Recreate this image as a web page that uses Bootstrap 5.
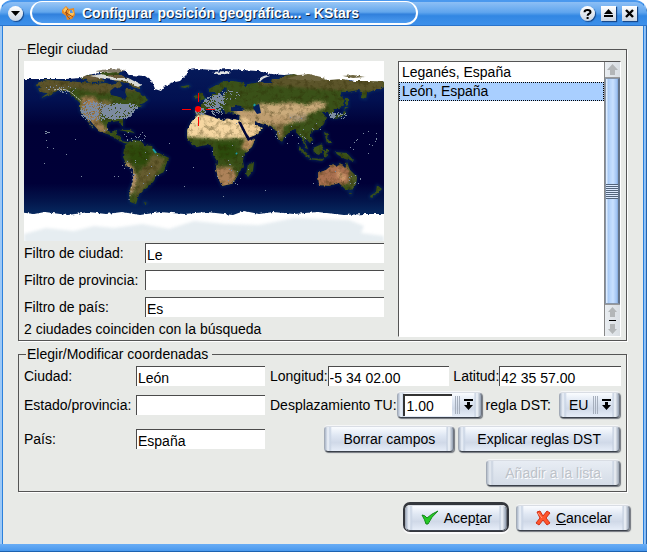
<!DOCTYPE html>
<html lang="es">
<head>
<meta charset="utf-8">
<meta name="viewport" content="width=device-width, initial-scale=1">
<title>Configurar posición geográfica... - KStars</title>
<link href="https://cdn.jsdelivr.net/npm/bootstrap@5.3.0/dist/css/bootstrap.min.css" rel="stylesheet">
<style>
body{font:14px/16px "Liberation Sans",Arial,sans-serif;color:#000;background:#fff}
.win{min-height:100vh;padding:2px 4px 8px 3px;border-radius:12px 12px 0 0;
 background:linear-gradient(#1c62b0,#1c62b0) 0 100%/100% 1px no-repeat,linear-gradient(#69adf5,#4495ec) 0 100%/100% 8px no-repeat,linear-gradient(90deg,#9cc8f6 2px,#2a80dc 2px,#2a80dc 3px,#4a98ee 3px,#4a98ee calc(100% - 4px),#2a80dc calc(100% - 4px),#2a80dc calc(100% - 3px),#9cc8f6 calc(100% - 3px),#7db6f4 calc(100% - 1px),#2464ae calc(100% - 1px))}
.titlebar{height:24px;margin:0 -4px 0 -3px;padding:0 10px 0 8px;border-radius:12px 12px 0 0;border-bottom:1px solid #2a74cc;background:linear-gradient(#8dbff5,#5fa5ee 45%,#3287e3 60%,#3d90ea)}
.tab{height:24px;margin-top:-1px;margin-left:7px;width:388px;padding-left:29px;border:2px solid #fff;border-top-width:1px;border-radius:12px;background:linear-gradient(#9ac7f6,#62a6ec 48%,#3180dc 58%,#4d9cf0)}
.tab h1{font-size:14px;line-height:20px;font-weight:700;color:#fff;text-shadow:1px 1px 0 #10243c;margin:0 0 0 6px;white-space:nowrap}
.tools{gap:6px}
.tbtn{width:15px;height:15px;padding:0;border:0;background:linear-gradient(#fff,#c9d4e2);box-shadow:1px 1px 1px #17488a;display:flex;align-items:center;justify-content:center}
.tbtn.round{border-radius:50%}
.content-area{background:#e8eae7;padding:15px 16px 12px 15px}
fieldset{border:1px solid #555;box-shadow:1px 1px 0 #fff;padding:0 5px}
legend{float:none;width:auto;font-size:14px;line-height:16px;margin:0 0 0 2px;padding:0 4px 0 1px;background:#e8eae7}
.cities{padding-bottom:3px}
.coords{padding-bottom:5px;margin-top:5px}
.split{display:grid;grid-template-columns:360fr 223fr;gap:14px;padding-top:4px}
.map{display:block;width:100%;aspect-ratio:2/1}
.filter{margin-top:7px}
.filter:first-of-type{margin-top:2px}
.filter label{width:121px;flex:none;padding-bottom:1px}
.status{margin-top:4px}
input.edit{min-width:0;flex:1 1 0;height:20px;border:0;border-top:1px solid #4b4b4b;border-left:1px solid #4b4b4b;padding:3px 0 0 1px;background:#fff;border-radius:0;outline:0;font:inherit;color:#000}
.listbox{border:1px solid #555;border-right-color:#fff;border-bottom-color:#fff;background:#fff;min-height:100%}
.citylist{flex:1;padding:1px 0 0}
.citylist .list-group-item{border:1px solid transparent;border-radius:0;padding:0 2px;height:19px;line-height:17px;color:#000;background:transparent}
.citylist .list-group-item.active{background:#a9cfff;border:1px dotted #000;color:#000;margin:0}
.scroll{width:16px;border-left:1px solid #888}
.scroll button{border:0;padding:0;width:100%;background:linear-gradient(90deg,#e9edf1,#d9dee3);display:flex;align-items:center;justify-content:center}
.scroll .up{height:16px;border-bottom:1px solid #999}
.thumb{flex:1;border:1px solid #8795a8;border-right:2px solid #64748a;background:linear-gradient(90deg,#dcecff 0 1px,#a5c7f3 2px,#b7d5fb 4px,#c9e1ff 7px,#9dc1f2 11px,#7da2d2);display:flex;align-items:center}
.grip{width:100%;height:15px;background:repeating-linear-gradient(#52647b 0 1px,#dceaff 1px 2px)}
.scroll .down{height:32px;border-top:1px solid #999}
.line{display:flex;align-items:center}
.row-a{margin-top:4px}
.row-b{margin-top:6px}
.row-c{margin-top:8px}
.lhs{flex:241 1 0;margin-right:5px;min-width:0}
.rhs{flex:351 1 0;min-width:0}
.lhs label{width:112px;flex:none;white-space:nowrap}
.rhs label{white-space:nowrap}
.plate{height:26px;padding:0 18px;border:1px solid;border-color:#d9dde4 #6d7480 #3a404a #a2aab6;border-radius:4px;color:#000;background:linear-gradient(90deg,#aab6c8 0,#eef3fa 3px,#c9d4e4 5px,transparent 7px,transparent calc(100% - 7px),#c3cede calc(100% - 6px),#f2f6fb calc(100% - 4px),#929eb0 100%),linear-gradient(#fafcff,#dfe7f3 35%,#d0d9e8 65%,#e6edf8);box-shadow:1px 1px 1px #70757d,0 -1px 0 #f5f6f7;font:inherit;white-space:nowrap}
.line .plate:last-child{margin-right:1px}
.plate:disabled{color:#bdc2c9;text-shadow:1px 1px 0 #fff;background:linear-gradient(90deg,#b2bcc9 0,#e8edf3 3px,#c9d2df 5px,transparent 7px,transparent calc(100% - 7px),#c3cede calc(100% - 6px),#eef1f5 calc(100% - 4px),#9ba5b3 100%),linear-gradient(#e8edf4,#d4dce7)}
.combo{display:flex;align-items:center;padding:0 7px 0 5px;flex:none}
.combo select{appearance:none;border:0;background:transparent;font:inherit;color:#000;padding:0;outline:0}
.combo select.white{width:49px;height:22px;background:#fff;border:solid #333;border-width:2px 0 0 2px;padding-left:2px;margin-bottom:1px}
.plate.default{box-shadow:0 -1px 0 2px #34373d,0 1px 0 2px #fbfbfb;border-radius:5px}
.actions{margin-top:13px;margin-right:-3px;gap:9px}
.actions .plate{display:flex;align-items:center;gap:4px;padding:0 17px}
.actions .default{padding:0 14px}
svg{flex:none}
</style>
<script defer src="https://cdn.jsdelivr.net/npm/bootstrap@5.3.0/dist/js/bootstrap.bundle.min.js"></script>
</head>
<body>
<div class="win d-flex flex-column">
<header class="titlebar d-flex align-items-start">
 <button class="tbtn round mt-1" aria-label="Menú de la ventana"><svg width="9" height="5"><path d="M0 0H9L4.500 5Z"/></svg></button>
 <div class="tab d-flex align-items-center">
  <svg width="15" height="16" viewBox="0 0 15 16"><path d="M1 5 5 1 8 4 13 3 14 10 11 14 6 15 5 11 1 8Z" fill="#e98a22"/><path d="M2 5 5 2 7 6 4 8ZM8 6 12 5 13 9 10 12 7 9Z" fill="#ffc65c"/><path d="M9 5 11 5 12 8 9 8ZM7 11H9L8 13Z" fill="#5b95dc"/><path d="M7 4C4 6 5 11 9 14M4 7 12 12" stroke="#9c4a16" fill="none"/></svg>
  <h1>Configurar posición geográfica... - KStars</h1>
 </div>
 <div class="tools d-flex ms-auto mt-1">
  <button class="tbtn round" aria-label="Ayuda"><svg width="9" height="10"><path d="M1.500 3.200Q1.500 1 4.500 1T7.500 3.200C7.500 4.800 4.600 4.600 4.600 6.800M4.600 8V10" fill="none" stroke="#000" stroke-width="2"/></svg></button>
  <button class="tbtn" aria-label="Enrollar"><svg width="9" height="9"><path d="M4.500 0 9 5H0ZM0 6H9V8H0Z"/></svg></button>
  <button class="tbtn" aria-label="Cerrar"><svg width="9" height="9"><path d="M1 1 8 8M8 1 1 8" stroke="#000" stroke-width="2.400"/></svg></button>
 </div>
</header>
<main class="content-area flex-grow-1">
 <fieldset class="cities">
  <legend>Elegir ciudad</legend>
  <div class="split">
   <div>
    <svg class="map" viewBox="0 0 360 180" role="img" aria-label="Mapa del mundo">
     <defs>
      <filter id="soft" x="-30%" y="-30%" width="160%" height="160%" color-interpolation-filters="sRGB"><feGaussianBlur stdDeviation="1.500"/></filter>
      <filter id="shelf" color-interpolation-filters="sRGB"><feGaussianBlur stdDeviation="1.500"/></filter>
      <filter id="rough" x="0" y="0" width="100%" height="100%" color-interpolation-filters="sRGB"><feTurbulence type="fractalNoise" baseFrequency=".3" numOctaves="3" seed="4" result="n"/><feDisplacementMap in="SourceGraphic" in2="n" scale="3" xChannelSelector="R" yChannelSelector="G"/></filter>
      <filter id="grain" x="0" y="0" width="100%" height="100%" color-interpolation-filters="sRGB"><feTurbulence type="fractalNoise" baseFrequency=".2" numOctaves="4" seed="8"/><feColorMatrix values="0 0 0 0 .16  0 0 0 0 .14  0 0 0 0 0  1.100 0 0 0 -.500"/></filter>
      <linearGradient id="sea" x1="0" y1="0" x2="0" y2="1"><stop offset="0" stop-color="#061c5c"/><stop offset=".22" stop-color="#021050"/><stop offset=".36" stop-color="#000036"/><stop offset=".68" stop-color="#000038"/><stop offset=".78" stop-color="#03164c"/><stop offset=".84" stop-color="#06265c"/></linearGradient>
      <path id="continents" d="M12 24 18 20 24 19 40 20 54 21 65 22 72 23 82 22 88 24 96 21 98 25 93 28 86 31 87 34 98 36 101 39 102 36 101 32 102 28 109 28 113 31 116 32 122 37 124 39 120 42 115 44 119 45 113 47 109 49 106 52 104 55 99 58 99 65 97 63 95 60 86 61 83 63 83 69 86 72 90 71 92 69 93 69 92 74 97 75 97 80 103 81 105 83 100 82 94 79 86 74 75 70 69 63 65 58 67 66 70 68 66 62 62 57 56 50 56 42 52 38 47 33 42 30 34 29 30 32 22 35 17 37 24 32 16 31 14 28 18 26 12 25Z M103 82 108 79 118 80 120 84 128 85 131 90 137 93 145 97 142 104 140 111 132 115 130 120 123 127 118 130 115 133 113 140 112 143 106 141 105 131 109 120 109 109 103 105 99 96 100 88Z M174 54 180 53 190 53 191 57 200 60 203 57 214 59 217 66 223 78 231 79 228 86 220 93 219 100 220 106 215 111 212 118 207 123 198 125 194 117 192 108 193 100 189 94 189 86 183 84 172 86 167 82 163 76 163 69 168 60Z M171 53 171 47 178 47 178 43 184 39 188 37 188 33 192 33 192 36 199 36 201 30 204 29 202 26 198 29 196 34 192 34 190 31 185 31 185 28 192 24 200 20 210 20 220 22 220 26 224 23 238 21 240 22 247 22 248 18 254 18 260 15 275 12 285 13 287 16 301 18 320 17 325 20 340 20 350 20 360 21 360 26 357 28 350 29 343 32 342 38 337 37 338 30 334 29 324 31 318 31 316 35 321 38 318 46 311 48 309 52 309 56 306 56 304 51 298 51 302 56 300 63 295 68 288 70 286 74 289 79 286 82 282 78 280 79 284 88 281 87 278 77 274 74 271 68 267 70 260 76 258 82 254 77 252 70 247 65 238 63 231 60 231 64 239 67 234 73 224 77 218 66 215 60 216 54 207 52 204 50 210 47 221 49 217 45 211 44 208 48 202 53 200 49 194 45 193 47 198 50 192 52 188 46 182 48 180 52 175 54Z M175 40 181 38 180 35 175 31 174 35 177 37Z M170 38 174 37 173 34 170 35Z M156 26 164 24 166 25 161 27Z M84 12 94 13 101 17 108 20 115 24 116 28 109 26 104 22 91 20 88 17Z M62 18 76 17 81 20 68 21 63 20Z M55 15 66 14 70 16 60 18Z M75 11 91 8 97 10 94 14 78 14Z M95 69 106 69 111 72 105 71Z M294 112 302 109 309 103 312 105 316 102 321 107 323 101 326 109 333 116 332 123 328 129 321 128 315 122 305 125 295 124Z M325 131 328 131 327 134Z M353 124 358 128 355 131 352 133 347 137 346 135 352 131Z M224 103 230 102 229 110 224 116 222 113Z M311 91 323 92 330 100 321 98 314 94Z M289 87 298 83 299 89 295 94 290 92Z M275 85 286 95 284 97 276 89Z M285 97 300 98 298 100 286 98Z M299 89 305 89 302 92 305 96 300 95Z M300 71 304 73 303 77 307 82 303 82Z M310 57 313 54 319 53 321 46 325 46 320 48 322 52 317 56Z M322 45 322 37 324 37 324 44Z M120 141 123 142 121 143Z"/>
      <clipPath id="land"><use href="#continents"/></clipPath>
     </defs>
     <rect width="360" height="180" fill="url(#sea)"/>
     <g fill="none" stroke="#0c4a76" stroke-width="2" opacity=".45" filter="url(#shelf)"><use href="#continents"/></g>
     <g filter="url(#rough)">
      <g clip-path="url(#land)">
       <rect width="360" height="180" fill="#3a5118"/>
       <g filter="url(#soft)">
        <path d="M10 16H120V30L75 32 50 27 15 36Z" fill="#5c532a"/>
        <path d="M57 36 70 35 77 45 75 60 85 70 79 73 62 61 57 51Z" fill="#a07d50"/>
        <path d="M76 39 88 39 85 51 77 51Z" fill="#756a3a"/>
        <path d="M162 52 216 55 224 78 212 77 200 78 163 76Z" fill="#f6d7a2"/>
        <path d="M214 56 230 58 241 67 228 80 220 78Z" fill="#f3d09a"/>
        <path d="M221 79 233 77 225 90 217 87Z" fill="#c09362"/>
        <path d="M205 46 225 50 248 45 268 47 275 60 253 66 235 63 216 56Z" fill="#c09e70"/>
        <path d="M234 42 250 43 267 41 284 44 292 40 303 42 300 47 282 54 250 55 236 50Z" fill="#ccac7c"/>
        <path d="M250 63 260 62 259 75 255 80Z" fill="#867245"/>
        <path d="M264 54 283 53 282 60 270 61Z" fill="#b09a7a"/>
        <path d="M190 106 208 106 213 116 206 126 194 126Z" fill="#ad8259"/>
        <path d="M292 104 320 103 332 115 324 123 292 126Z" fill="#aa7050"/>
        <path d="M314 108 322 116 320 121 313 116Z" fill="#d6a070"/>
        <path d="M326 108 336 116 330 130 324 124Z" fill="#4c5a25"/>
        <path d="M102 100 109 106 113 117 109 132 105 134 108 115 101 104Z" fill="#bd9670"/>
        <path d="M126 92 142 99 134 112 120 127 111 138 114 113Z" fill="#655c2f"/>
        <path d="M230 14H360V31L310 29 235 24Z" fill="#5c552a"/>
        <path d="M192 82 210 82 214 97 195 98Z" fill="#2b4a0c"/>
        <path d="M102 84 120 86 128 93 122 105 108 102Z" fill="#2d490b"/>
       </g>
       <rect width="360" height="180" filter="url(#grain)"/>
      </g>
      <path d="M80 14 97 14 108 19 95 19ZM57 15 72 14 79 18 65 19Z" fill="#6a5a39"/>
      <path d="M-6-6H366V21L347 20 331 20 318 18 305 19 292 17 280 16 270 13 260 14 247 13 234 10 218 9 204 8 190 9 173 8 164 9 162 14 156 20 147 22 140 26 137 30 131 28 128 20 121 15 106 14 98 9 84 12 75 12 63 14 56 17 42 18 20 18-6 18Z" fill="#fff"/>
      <path d="M66 15 78 13 91 17 104 17 118 24 114 26 101 20 88 19 76 17Z" fill="#d9dad3"/>
      <path d="M72 10 84 8 102 9 96 11 80 12Z" fill="#817966"/>
      <path d="M275 14 285 13 301 17 296 20 278 19 262 18Z" fill="#6d653f"/>
      <path d="M319 15 329 14 341 16 329 17Z" fill="#6d653f"/>
      <path d="M234 20Q236 15 244 14L246 15Q238 17 236 21Z" fill="#dcdedc"/>
      <path d="M188 11 203 10 207 12 196 14Z" fill="#e4e6e6"/>
      <path d="M-6 151 10 153 21 151 44 154 65 151 82 153 98 151 116 154 136 151 160 153 183 151 209 154 220 150 235 153 249 151 270 153 294 151 320 154 341 153 366 153V186H-6Z" fill="#fff"/>
     </g>
     <path d="M0 173 22 167 50 170 70 165 90 167 118 163 145 168 170 160 200 163 235 164 270 157 325 159 340 165 337 172 360 175V182H0Z" fill="#e6edf1" filter="url(#shelf)"/>
     <path d="M86 30 91 26 97 29 101 31 103 36 99 37 89 34ZM230 45 235 43 237 52 233 53 229 47ZM207 46 218 48 219 50 207 50Z" fill="#061e5a"/>
     <path d="M214 61 217 61 223 73 226 77 237 73 224 80ZM180 53 188 49 200 53 214 54 212 58 193 57Z" fill="#000638"/>
     <path d="M106 107 109 115 107 130 105 139" fill="none" stroke="#d3c6b5" stroke-dasharray="1 3"/>
     <path d="M30 29Q43 26 51 35L57 40" fill="none" stroke="#c9ccc8" stroke-dasharray="2 1"/>
     <path d="M129 88 132 92M230 45 231 43M212 92 213 93M181 38 182 39" stroke="#199da8" stroke-width="2"/>
     <path id="towns" fill="#7c8ba0" shape-rendering="crispEdges"/>
     <path d="M158 48.500H167M182 48.500H191M174.500 32V41M174.500 56V65" stroke="#f00"/>
     <circle cx="174" cy="48" r="3" fill="#f00"/>
    </svg>
    <div class="filter d-flex align-items-center"><label for="fc">Filtro de ciudad:</label><input class="edit" id="fc" value="Le"></div>
    <div class="filter d-flex align-items-center"><label for="fp">Filtro de provincia:</label><input class="edit" id="fp"></div>
    <div class="filter d-flex align-items-center"><label for="fn">Filtro de país:</label><input class="edit" id="fn" value="Es"></div>
    <div class="status">2 ciudades coinciden con la búsqueda</div>
   </div>
   <div class="listbox d-flex">
    <div class="citylist list-group list-group-flush" role="listbox" aria-label="Ciudades">
     <button class="list-group-item text-start" role="option">Leganés, España</button>
     <button class="list-group-item text-start active" role="option" aria-selected="true">León, España</button>
    </div>
    <div class="scroll d-flex flex-column">
     <button class="up" aria-label="Subir"><svg width="11" height="11"><path d="M5.500 0 11 6H8V11H3V6H0Z" fill="#b3b6b8"/></svg></button>
     <div class="thumb"><div class="grip"></div></div>
     <button class="down" aria-label="Bajar"><svg width="11" height="28"><path d="M5.500 0 10 5H8V10H3V5H1ZM3 17H8V22H10L5.500 27 1 22H3Z" fill="#b3b6b8"/><path d="M2 13.500H9" stroke="#000"/></svg></button>
    </div>
   </div>
  </div>
 </fieldset>
 <fieldset class="coords">
  <legend>Elegir/Modificar coordenadas</legend>
  <div class="line row-a">
   <div class="lhs line"><label for="ci">Ciudad:</label><input class="edit" id="ci" value="León"></div>
   <div class="rhs line"><label for="lo">Longitud:</label><input class="edit" id="lo" value="-5 34 02.00"><label for="la" class="ms-1">Latitud:</label><input class="edit" id="la" value="42 35 57.00"></div>
  </div>
  <div class="line row-b">
   <div class="lhs line"><label for="es">Estado/provincia:</label><input class="edit" id="es"></div>
   <div class="rhs line"><label for="tu">Desplazamiento TU:</label>
    <div class="plate combo"><select class="white" id="tu"><option>1.00</option></select><svg width="22" height="18"><path d="M3.500 0V18M5.500 0V18M7.500 0V18" stroke="#a6afbd"/><path d="M12 3H21V5H12ZM15 6H18V9H21L16.500 14 12 9H15Z"/></svg></div>
    <label for="ds" class="ms-1">regla DST:</label>
    <div class="plate combo ms-auto"><select id="ds" class="ms-1"><option>EU</option></select><svg width="23" height="18"><path d="M4.500 0V18M6.500 0V18M8.500 0V18" stroke="#a6afbd"/><path d="M13 3H22V5H13ZM16 6H19V9H22L17.500 14 13 9H16Z"/></svg></div>
   </div>
  </div>
  <div class="line row-c">
   <div class="lhs line"><label for="pa">País:</label><input class="edit" id="pa" value="España"></div>
   <div class="rhs line justify-content-end gap-1"><button class="plate">Borrar campos</button><button class="plate">Explicar reglas DST</button></div>
  </div>
  <div class="line row-c justify-content-end"><button class="plate" disabled>Añadir a la lista</button></div>
 </fieldset>
 <div class="actions d-flex justify-content-end">
  <button class="plate default"><svg width="20" height="18"><path d="M2 6Q5 6 7 9 11 5 18 2 11 8 8 15H6Q5 11 2 6Z" fill="#25c925" stroke="#138918"/></svg><span>Acep<u>t</u>ar</span></button>
  <button class="plate"><svg width="18" height="18"><path d="M3 3 6 2 9 7 13 2 16 4 12 9 16 14 13 16 9 11 5 16 2 14 6 9Z" fill="#ff552b" stroke="#d22f16"/><path d="M4 4 8 9" stroke="#ffa184"/></svg><span><u>C</u>ancelar</span></button>
 </div>
</main>
</div>
<script>
// Scatter town dots: [x, y, horizontal spread, vertical spread, count]
const areas = [[93,50,16,8,800],[74,50,18,9,330],[65,49,9,10,130],[104,46,10,4,110],[190,41,11,7,240],[194,37,5,5,90],[176,50,5,4,60],[205,34,12,5,35],[193,49,6,6,60],[308,54,3,3,45],[316,54,7,3,22],[205,112,14,14,12],[331,119,6,8,12],[125,106,18,18,15],[22,71,3,2,8],[35,28,18,4,30],[110,75,13,5,20],[270,70,28,14,22],[340,80,18,12,14],[180,95,175,40,30]];
let s = 17, d = "";
const rnd = () => (s = (s * 16807) % 2147483647) / 2147483647;
for (const [x, y, a, b, n] of areas) for (let i = 0; i < n; i++) {
  const t = rnd() * 6.283, r = Math.sqrt(rnd());
  d += `M${Math.round(x + Math.cos(t) * r * a)} ${Math.round(y + Math.sin(t) * r * b)}h1v1h-1z`;
}
document.getElementById("towns").setAttribute("d", d);
</script>
</body>
</html>
